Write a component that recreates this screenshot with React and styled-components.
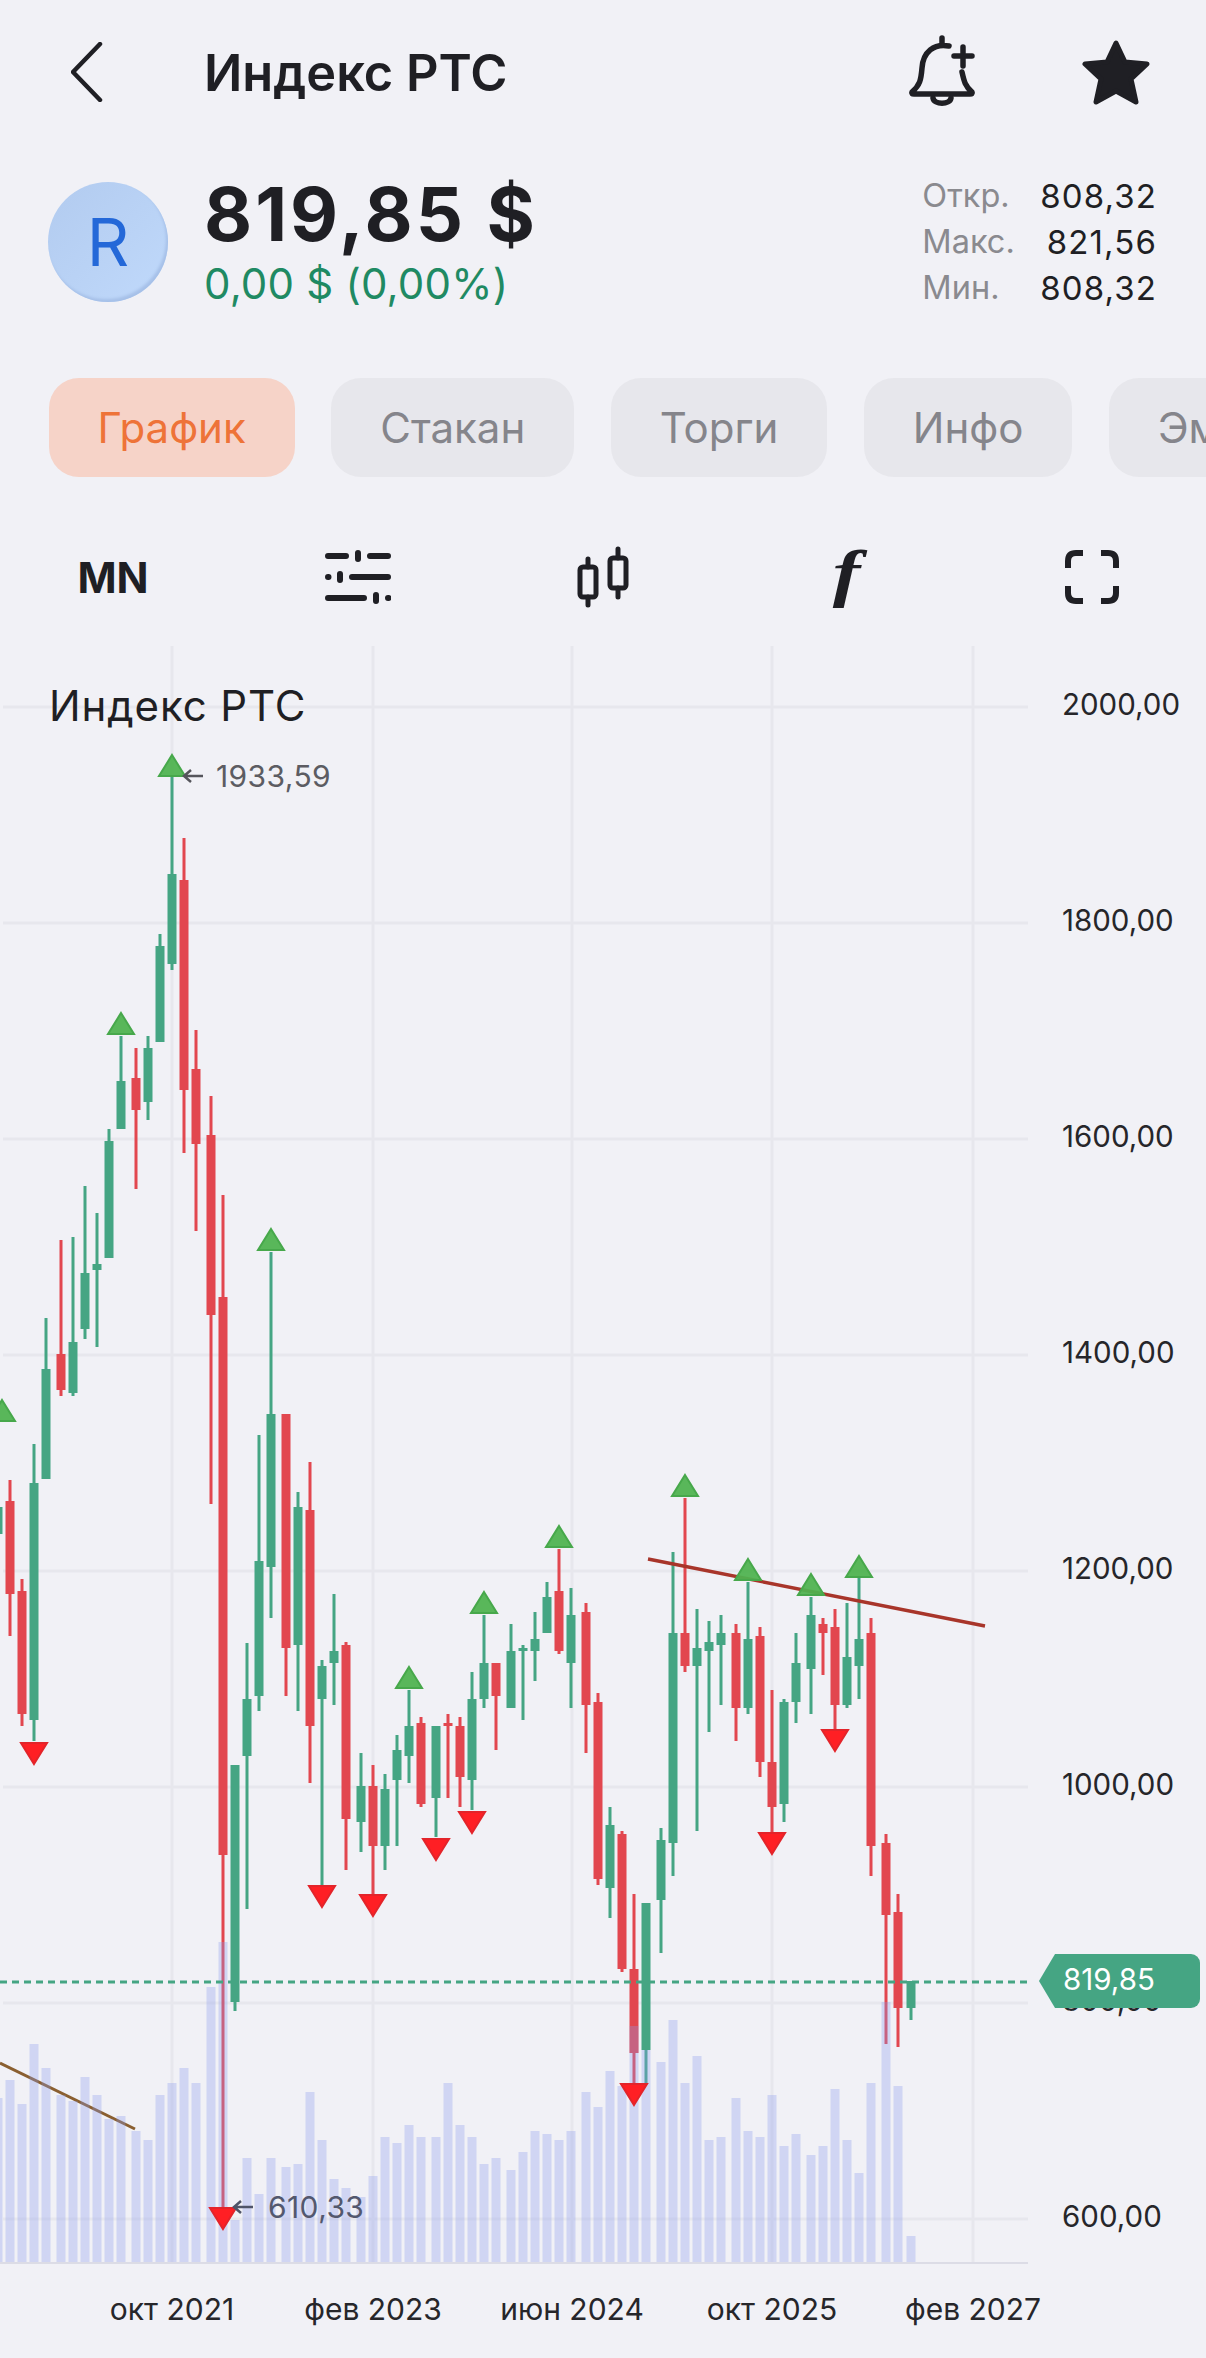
import React from "react";
import styled, { createGlobalStyle } from "styled-components";

const GREEN = "#45a583";
const RED = "#e2474f";
const INK = "#1f1f24";

const GlobalStyle = createGlobalStyle`
  html, body {
    margin: 0;
    padding: 0;
    background: #f1f1f6;
  }
  * {
    box-sizing: border-box;
  }
`;

const Page = styled.div`
  display: flex;
  flex-direction: column;
  width: 1206px;
  height: 2358px;
  overflow: hidden;
  background: #f1f1f6;
  color: ${INK};
  font-family: Inter, "Noto Sans", sans-serif;
`;

const Header = styled.header`
  display: flex;
  align-items: center;
  height: 144px;
  padding: 0 56px 0 71px;
`;

const BackButton = styled.svg`
  width: 32px;
  height: 60px;
  fill: none;
  stroke: ${INK};
  stroke-width: 4.5;
  stroke-linecap: round;
  stroke-linejoin: round;
`;

const Title = styled.h1`
  flex: 1;
  margin: 0 0 0 101px;
  font-size: 50.5px;
  font-weight: 600;
`;

const BellIcon = styled.svg`
  width: 70px;
  height: 76px;
  margin-right: 104px;
  fill: none;
  stroke: ${INK};
  stroke-width: 5.5;
  stroke-linecap: round;
  stroke-linejoin: round;
`;

const StarIcon = styled.svg`
  width: 68px;
  height: 66px;
  fill: ${INK};
  stroke: ${INK};
  stroke-width: 5;
  stroke-linejoin: round;
`;

const Quote = styled.section`
  display: flex;
  align-items: center;
  height: 196px;
  padding: 0 49px 0 48px;
`;

const Logo = styled.div`
  display: flex;
  align-items: center;
  justify-content: center;
  flex: none;
  width: 120px;
  height: 120px;
  border-radius: 50%;
  background: linear-gradient(135deg, #b2cbef, #c0d9fb);
  box-shadow: inset -2px -3px 3px #a6c0e8;
  color: #2468d8;
  font-size: 66px;
`;

const PriceBlock = styled.div`
  flex: 1;
  margin: 2px 0 0 36px;
`;

const Price = styled.div`
  font-size: 74px;
  font-weight: 700;
  line-height: 72px;
  letter-spacing: 3px;
`;

const Change = styled.div`
  margin-top: 10px;
  color: #1f8a63;
  font-size: 42px;
  line-height: 48px;
  letter-spacing: 0.2px;
`;

const Stats = styled.dl`
  display: grid;
  grid-template-columns: 118px auto;
  margin: 0;
  font-size: 33px;
  line-height: 46px;
`;

const StatLabel = styled.dt`
  color: #8a8a8f;
  font-size: 32.5px;
`;

const StatValue = styled.dd`
  margin: 0;
  letter-spacing: 1.1px;
  text-align: right;
`;

const Tabs = styled.nav`
  display: flex;
  flex: none;
  gap: 36.5px;
  margin-top: 38px;
  padding-left: 48.5px;
  white-space: nowrap;
`;

const Tab = styled.div`
  display: flex;
  align-items: center;
  flex: none;
  height: 99px;
  padding: 0 49px;
  border-radius: 30px;
  background: ${(p) => (p.$active ? "#f6d3c8" : "#e7e7ec")};
  color: ${(p) => (p.$active ? "#ee7338" : "#85858b")};
  font-size: 42px;
`;

const Toolbar = styled.div`
  display: flex;
  align-items: center;
  justify-content: space-between;
  flex: none;
  height: 100px;
  margin-top: 50px;
  padding: 0 79px 0 78px;
`;

const ToolItem = styled.div`
  display: flex;
  align-items: center;
  justify-content: center;
  width: 70px;
  height: 70px;
`;

const PeriodLabel = styled.span`
  font-size: 42px;
  font-weight: 700;
`;

const FunctionGlyph = styled.span`
  margin: -8px 0 0 -2px;
  font-family: "Liberation Serif", serif;
  font-size: 64px;
  font-style: italic;
  font-weight: 700;
  line-height: 70px;
  transform: scaleX(1.3);
`;

const SlidersIcon = styled.svg`
  width: 66px;
  height: 64px;
  stroke: ${INK};
  stroke-width: 6;
  stroke-linecap: round;
`;

const CandlesIcon = styled.svg`
  width: 56px;
  height: 64px;
  fill: none;
  stroke: ${INK};
  stroke-width: 5;
  stroke-linecap: round;
  stroke-linejoin: round;
`;

const ExpandIcon = styled.svg`
  width: 54px;
  height: 54px;
  fill: none;
  stroke: ${INK};
  stroke-width: 6;
`;

const ChartArea = styled.div`
  position: relative;
  flex: none;
  width: 1206px;
  height: 1718px;
  margin-top: 13px;
`;

const ChartSvg = styled.svg`
  display: block;
  width: 1206px;
  height: 1718px;
`;

const ChartTitle = styled.text`
  fill: ${INK};
  font-size: 42px;
  letter-spacing: 0.9px;
`;

const ExtremeLabel = styled.text`
  fill: ${(p) => p.$color};
  font-size: 30px;
  letter-spacing: 0.4px;
  dominant-baseline: central;
`;

const AxisLabel = styled.text`
  fill: #26262a;
  font-size: ${(p) => p.$size}px;
  dominant-baseline: central;
`;

const PriceTag = styled.div`
  position: absolute;
  top: 1314px;
  left: 1055px;
  display: flex;
  align-items: center;
  width: 145px;
  height: 54px;
  padding: 0 0 4px 8px;
  border-radius: 0 9px 9px 0;
  background: ${GREEN};
  color: #fff;
  font-size: 29.5px;

  &::before {
    content: "";
    position: absolute;
    top: 0;
    left: -16px;
    width: 16px;
    height: 54px;
    background: ${GREEN};
    clip-path: polygon(100% 0, 0 50%, 100% 100%);
  }
`;

// x, color, body top, body bottom, wick top, wick bottom
const CANDLES = [
  [-2, "g", 1507, 1534, 1422, 1534],
  [10, "r", 1501, 1594, 1480, 1636],
  [22, "r", 1591, 1714, 1579, 1726],
  [34, "g", 1483, 1720, 1444, 1741],
  [46, "g", 1369, 1479, 1318, 1479],
  [61, "r", 1354, 1390, 1240, 1396],
  [73, "g", 1342, 1393, 1237, 1396],
  [85, "g", 1273, 1329, 1186, 1339],
  [97, "g", 1264, 1270, 1213, 1347],
  [109, "g", 1141, 1258, 1129, 1258],
  [121, "g", 1081, 1129, 1036, 1129],
  [136, "r", 1078, 1110, 1048, 1189],
  [148, "g", 1048, 1102, 1036, 1120],
  [160, "g", 946, 1042, 934, 1042],
  [172, "g", 874, 964, 777, 970],
  [184, "r", 880, 1090, 838, 1153],
  [196, "r", 1069, 1144, 1030, 1231],
  [211, "r", 1135, 1315, 1096, 1504],
  [223, "r", 1297, 1855, 1195, 2207],
  [235, "g", 1765, 2002, 1765, 2011],
  [247, "g", 1699, 1756, 1643, 1909],
  [259, "g", 1561, 1696, 1435, 1711],
  [271, "g", 1414, 1567, 1252, 1618],
  [286, "r", 1414, 1648, 1414, 1696],
  [298, "g", 1507, 1645, 1492, 1711],
  [310, "r", 1510, 1726, 1462, 1783],
  [322, "g", 1666, 1699, 1660, 1886],
  [334, "g", 1651, 1663, 1594, 1705],
  [346, "r", 1645, 1819, 1642, 1870],
  [361, "g", 1786, 1822, 1753, 1852],
  [373, "r", 1786, 1846, 1765, 1895],
  [385, "g", 1789, 1846, 1774, 1870],
  [397, "g", 1750, 1780, 1735, 1846],
  [409, "g", 1726, 1756, 1690, 1783],
  [421, "r", 1723, 1804, 1717, 1807],
  [436, "g", 1726, 1798, 1726, 1837],
  [448, "r", 1723, 1726, 1714, 1798],
  [460, "r", 1726, 1777, 1717, 1807],
  [472, "g", 1699, 1780, 1672, 1810],
  [484, "g", 1663, 1699, 1615, 1708],
  [496, "r", 1663, 1696, 1663, 1750],
  [511, "g", 1651, 1708, 1624, 1708],
  [523, "g", 1648, 1651, 1645, 1720],
  [535, "g", 1639, 1651, 1612, 1681],
  [547, "g", 1597, 1633, 1582, 1633],
  [559, "r", 1591, 1651, 1549, 1654],
  [571, "g", 1615, 1663, 1588, 1708],
  [586, "r", 1612, 1705, 1603, 1753],
  [598, "r", 1702, 1879, 1693, 1885],
  [610, "g", 1825, 1888, 1807, 1918],
  [622, "r", 1834, 1969, 1831, 1972],
  [634, "r", 1969, 2053, 1894, 2083],
  [646, "g", 1903, 2050, 1903, 2083],
  [661, "g", 1840, 1900, 1828, 1953],
  [673, "g", 1633, 1843, 1552, 1876],
  [685, "r", 1633, 1666, 1498, 1672],
  [697, "g", 1648, 1666, 1609, 1831],
  [709, "g", 1642, 1651, 1621, 1732],
  [721, "g", 1633, 1645, 1615, 1705],
  [736, "r", 1633, 1708, 1624, 1741],
  [748, "g", 1639, 1708, 1582, 1714],
  [760, "r", 1636, 1762, 1627, 1777],
  [772, "r", 1762, 1807, 1690, 1832],
  [784, "g", 1702, 1804, 1699, 1822],
  [796, "g", 1663, 1702, 1633, 1723],
  [811, "g", 1615, 1669, 1597, 1714],
  [823, "r", 1624, 1633, 1618, 1675],
  [835, "r", 1627, 1705, 1609, 1729],
  [847, "g", 1657, 1705, 1603, 1708],
  [859, "g", 1639, 1666, 1578, 1699],
  [871, "r", 1633, 1846, 1618, 1876],
  [886, "r", 1843, 1915, 1834, 2044],
  [898, "r", 1912, 2008, 1894, 2047],
  [911, "g", 1981, 2008, 1981, 2020],
];

const VOLUMES = [
  [-2, 2098], [10, 2080], [22, 2104], [34, 2044], [46, 2068], [61, 2095], [73, 2101],
  [85, 2077], [97, 2095], [109, 2119], [121, 2116], [136, 2131], [148, 2140], [160, 2095],
  [172, 2083], [184, 2068], [196, 2083], [211, 1987], [223, 1942], [235, 2220], [247, 2158],
  [259, 2194], [271, 2158], [286, 2167], [298, 2164], [310, 2092], [322, 2140], [334, 2179],
  [346, 2188], [361, 2197], [373, 2176], [385, 2137], [397, 2143], [409, 2125], [421, 2137],
  [436, 2137], [448, 2083], [460, 2125], [472, 2137], [484, 2164], [496, 2158], [511, 2170],
  [523, 2152], [535, 2131], [547, 2134], [559, 2140], [571, 2131], [586, 2092], [598, 2107],
  [610, 2071], [622, 2086], [634, 2026], [646, 2050], [661, 2062], [673, 2020], [685, 2083],
  [697, 2056], [709, 2140], [721, 2137], [736, 2098], [748, 2131], [760, 2137], [772, 2095],
  [784, 2146], [796, 2134], [811, 2155], [823, 2146], [835, 2089], [847, 2140], [859, 2173],
  [871, 2083], [886, 2002], [898, 2086], [911, 2236],
];

const UP_MARKS = [
  [2, 1398], [121, 1011], [172, 753], [271, 1227], [409, 1665], [484, 1590],
  [559, 1524], [685, 1473], [748, 1557], [811, 1572], [859, 1554],
];

const DOWN_MARKS = [
  [34, 1766], [223, 2231], [322, 1909], [373, 1918], [436, 1862], [472, 1835],
  [634, 2107], [772, 1856], [835, 1753],
];

const GRID_ROWS = [707, 923, 1139, 1355, 1571, 1787, 2003, 2219];
const GRID_COLUMNS = [172, 373, 572, 772, 973];
const PRICE_LABELS = ["2000,00", "1800,00", "1600,00", "1400,00", "1200,00", "1000,00", "800,00", "600,00"];
const DATE_LABELS = ["окт 2021", "фев 2023", "июн 2024", "окт 2025", "фев 2027"];

function Chart() {
  return (
    <ChartArea>
      <ChartSvg viewBox="0 640 1206 1718">
        {GRID_ROWS.map((y) => (
          <line key={y} x1="3" x2="1028" y1={y} y2={y} stroke="#e7e7ed" strokeWidth="3" />
        ))}
        {GRID_COLUMNS.map((x) => (
          <line key={x} x1={x} x2={x} y1="646" y2="2263" stroke="#e7e7ed" strokeWidth="3" />
        ))}

        {CANDLES.map(([x, color, top, bottom, wickTop, wickBottom]) => (
          <g key={x} fill={color === "g" ? GREEN : RED}>
            <rect x={x - 1.5} y={wickTop} width="3" height={wickBottom - wickTop} />
            <rect x={x - 4.5} y={top} width="9" height={bottom - top} />
          </g>
        ))}

        <line x1="0" y1="2063" x2="135" y2="2129" stroke="#8a5f30" strokeWidth="3" />
        <line x1="648" y1="1559" x2="985" y2="1626" stroke="#a8352a" strokeWidth="3.5" />

        {VOLUMES.map(([x, top]) => (
          <rect key={x} x={x - 4.5} y={top} width="9" height={2263 - top} fill="rgba(141,154,236,0.32)" />
        ))}
        <line x1="0" x2="1028" y1="2263" y2="2263" stroke="#dcdce6" strokeWidth="2" />

        {UP_MARKS.map(([x, tip]) => (
          <polygon
            key={x}
            points={`${x},${tip + 2} ${x + 13},${tip + 23} ${x - 13},${tip + 23}`}
            fill="#4fb350"
            fillOpacity="0.94"
            stroke="#47a84b"
            strokeWidth="2"
          />
        ))}
        {DOWN_MARKS.map(([x, tip]) => (
          <polygon
            key={x}
            points={`${x},${tip - 2} ${x + 13},${tip - 23} ${x - 13},${tip - 23}`}
            fill="#ff1f24"
            stroke="#e3242a"
            strokeWidth="2"
          />
        ))}

        <line x1="0" x2="1028" y1="1982" y2="1982" stroke={GREEN} strokeWidth="3" strokeDasharray="7 5" />

        <path d="M203 776 H184 M191 770 L184 776 L191 782" fill="none" stroke="#55555b" strokeWidth="2.5" />
        <ExtremeLabel x="216" y="776" $color="#5c5c62">1933,59</ExtremeLabel>
        <path d="M253 2207 H234 M241 2201 L234 2207 L241 2213" fill="none" stroke="#4f5468" strokeWidth="2.5" />
        <ExtremeLabel x="268" y="2207" $color="#53586e">610,33</ExtremeLabel>

        <ChartTitle x="49" y="721">Индекс РТС</ChartTitle>

        {PRICE_LABELS.map((label, i) => (
          <AxisLabel key={label} $size={29.5} x="1062" y={GRID_ROWS[i] - 3}>{label}</AxisLabel>
        ))}
        {DATE_LABELS.map((label, i) => (
          <AxisLabel key={label} $size={30} x={GRID_COLUMNS[i]} y="2309" textAnchor="middle">{label}</AxisLabel>
        ))}
      </ChartSvg>
      <PriceTag>819,85</PriceTag>
    </ChartArea>
  );
}

export default function App() {
  return (
    <Page>
      <GlobalStyle />
      <Header>
        <BackButton viewBox="0 0 32 60">
          <path d="M29 2 L2 30 L29 58" />
        </BackButton>
        <Title>Индекс РТС</Title>
        <BellIcon viewBox="18 14 70 76">
          <path d="M52 18 V24 M59 26 C44 23 33 32 32 48 C31 60 30 65 22 72 Q21 74 24 74 H80 Q83 74 82 72 C75 66 74 61 72 52" />
          <path d="M43 78 C44 85 60 85 61 78" />
          <path d="M64 36 H82 M73 27 V46" />
        </BellIcon>
        <StarIcon viewBox="0 0 68 66">
          <path d="M34 4 L43 23 L65 25 L49 40 L54 63 L34 52 L14 63 L19 40 L3 25 L25 23 Z" />
        </StarIcon>
      </Header>

      <Quote>
        <Logo>R</Logo>
        <PriceBlock>
          <Price>819,85 $</Price>
          <Change>0,00 $ (0,00%)</Change>
        </PriceBlock>
        <Stats>
          <StatLabel>Откр.</StatLabel>
          <StatValue>808,32</StatValue>
          <StatLabel>Макс.</StatLabel>
          <StatValue>821,56</StatValue>
          <StatLabel>Мин.</StatLabel>
          <StatValue>808,32</StatValue>
        </Stats>
      </Quote>

      <Tabs>
        <Tab $active>График</Tab>
        <Tab>Стакан</Tab>
        <Tab>Торги</Tab>
        <Tab>Инфо</Tab>
        <Tab>Эмитент</Tab>
      </Tabs>

      <Toolbar>
        <ToolItem>
          <PeriodLabel>MN</PeriodLabel>
        </ToolItem>
        <ToolItem>
          <SlidersIcon viewBox="16 15 66 64">
            <path d="M19 26 H37 M49 23 V29 M61 26 H79" />
            <path d="M19 47 H19.5 M31 44 V50 M43 47 H79" />
            <path d="M19 68 H55 M67 65 V71 M79 68 H79.5" />
          </SlidersIcon>
        </ToolItem>
        <ToolItem>
          <CandlesIcon viewBox="265 15 56 64">
            <rect x="270" y="37" width="16" height="30" rx="3" />
            <path d="M278 29 V37 M278 67 V75" />
            <rect x="300" y="28" width="16" height="30" rx="3" />
            <path d="M308 19 V28 M308 58 V67" />
          </CandlesIcon>
        </ToolItem>
        <ToolItem>
          <FunctionGlyph>f</FunctionGlyph>
        </ToolItem>
        <ToolItem>
          <ExpandIcon viewBox="0 0 54 54">
            <path d="M18 3 H11 Q3 3 3 11 V18" />
            <path d="M36 3 H43 Q51 3 51 11 V18" />
            <path d="M3 36 V43 Q3 51 11 51 H18" />
            <path d="M51 36 V43 Q51 51 43 51 H36" />
          </ExpandIcon>
        </ToolItem>
      </Toolbar>

      <Chart />
    </Page>
  );
}
